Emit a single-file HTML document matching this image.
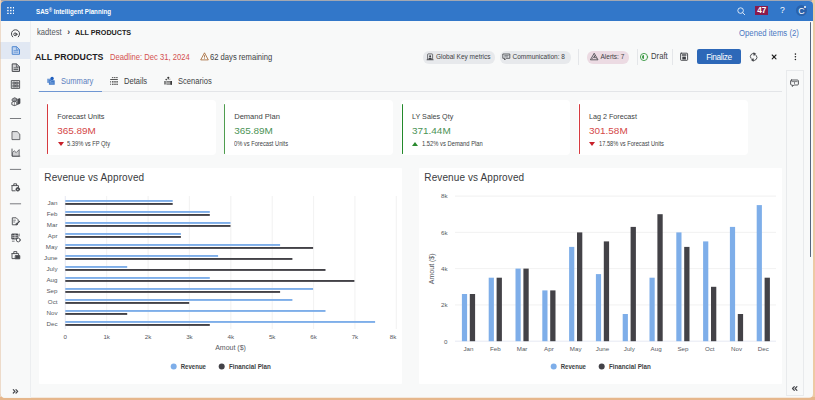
<!DOCTYPE html>
<html><head><meta charset="utf-8">
<style>
*{margin:0;padding:0;box-sizing:border-box}
html,body{width:815px;height:400px;overflow:hidden;background:#e9bb8d;font-family:"Liberation Sans",sans-serif}
.a{position:absolute;white-space:nowrap}
#frame{position:absolute;left:0;top:0;width:815px;height:400px;background:#e9bb8d}
#topgray{position:absolute;left:0;top:0;width:815px;height:1px;background:#a3a8b2}
#win{position:absolute;left:0;top:0;width:815px;height:400px;background:#f8f9f9;clip-path:inset(1px 2px 2.2px 0.9px round 4px)}
#hdr{position:absolute;left:0;top:0;width:815px;height:21px;background:#3277c9}
#side{position:absolute;left:0;top:21px;width:31px;height:379px;background:#f8f9f9;border-right:1px solid #eceef0}
.card{position:absolute;background:#fff;border-radius:4px}
.bar{position:absolute;width:2px;border-radius:1px}
.chip{position:absolute;height:12px;border-radius:6px;background:#e7e9ec;font-size:6.5px;color:#3d3f44;line-height:12px}
.sep{position:absolute;width:1px;background:#e4e6e9}
svg text{font-family:"Liberation Sans",sans-serif}
</style></head><body>
<div id="frame"></div>
<div id="topgray"></div>
<div class="a" style="left:0;top:0;width:1px;height:400px;background:#e9d3bf"></div>
<div class="a" style="left:812px;top:0;width:3px;height:400px;background:#eec9a4"></div>
<div class="a" style="left:0;top:397px;width:815px;height:3px;background:#e6b78c"></div>
<div id="win">
  <div id="hdr">
    <!-- grid icon -->
    <svg class="a" style="left:6.7px;top:7px" width="7.6" height="7.2" viewBox="0 0 8 8" fill="#fff">
      <rect x="0" y="0" width="1.6" height="1.6"/><rect x="3.2" y="0" width="1.6" height="1.6"/><rect x="6.4" y="0" width="1.6" height="1.6"/>
      <rect x="0" y="3.2" width="1.6" height="1.6"/><rect x="3.2" y="3.2" width="1.6" height="1.6"/><rect x="6.4" y="3.2" width="1.6" height="1.6"/>
      <rect x="0" y="6.4" width="1.6" height="1.6"/><rect x="3.2" y="6.4" width="1.6" height="1.6"/><rect x="6.4" y="6.4" width="1.6" height="1.6"/>
    </svg>
    <div class="a" style="left:36.3px;top:5.3px;font-size:6.9px;line-height:10px;font-weight:bold;color:#fff;transform:scaleX(0.9);transform-origin:0 0">SAS<span style="font-size:5px;vertical-align:1.5px">®</span> Intelligent Planning</div>
    <!-- search -->
    <svg class="a" style="left:736.5px;top:7px" width="9" height="9" viewBox="0 0 9 9" fill="none" stroke="#fff" stroke-width="0.8">
      <circle cx="3.6" cy="3.6" r="2.8"/><line x1="5.6" y1="5.6" x2="8" y2="8"/>
    </svg>
    <div class="a" style="left:755.2px;top:6px;width:13.2px;height:8.7px;background:#8a1a4c;color:#fff;font-weight:bold;font-size:8.2px;line-height:9.6px;letter-spacing:0.1px;text-align:center">47</div>
    <div class="a" style="left:780px;top:5.3px;font-size:8.6px;line-height:10px;color:#fff">?</div>
    <div class="a" style="left:795.7px;top:5.2px;width:11px;height:11px;border-radius:50%;background:#2a62ab"></div>
    <div class="a" style="left:798.3px;top:5.6px;font-size:8.8px;line-height:10px;color:#fff">C</div>
    <div class="a" style="left:804.1px;top:5.6px;width:2px;height:2px;border-radius:50%;background:#fff"></div>
  </div>

  <div id="side">
  </div>
  <div class="a" style="left:1px;top:41.9px;width:28.8px;height:16.8px;background:#e1e8f3"></div>
  <div class="a" style="left:0;top:41.9px;width:1.4px;height:16.8px;background:#7b92b2"></div>
  <svg class="a" style="left:0;top:0" width="30" height="400" viewBox="0 0 30 400" fill="none" stroke="#46484d" stroke-width="0.9" stroke-linejoin="round" stroke-linecap="round">
    <!-- dashboard -->
    <path d="M12.7 36.9 A4.1 4.1 0 1 1 18.3 36.9" stroke-width="1"/>
    <circle cx="15" cy="34.3" r="1.3" stroke-width="0.9"/>
    <path d="M15.9 33.1 L17.6 34.3 L15.9 35.5" stroke-width="0.8"/>
    <!-- doc selected -->
    <path d="M12.6 46.7 H16.6 L19.5 49.6 V54.3 H12.6 Z" stroke="#4f87d0" stroke-width="1" fill="#c3d6f0"/>
    <path d="M16.4 46.8 V49.8 H19.4" stroke="#4f87d0" stroke-width="0.7"/>
    <path d="M14 50.6 H17.8 M14 52.2 H17.8" stroke="#4f87d0" stroke-width="0.7"/>
    <!-- doc dark -->
    <path d="M12.6 63.9 H16.6 L19.5 66.8 V71.4 H12.6 Z" stroke="#46484d" stroke-width="1" fill="#d3d4d6"/>
    <path d="M16.4 64 V67 H19.4" stroke-width="0.7"/>
    <path d="M14 67.8 H17.8" stroke-width="0.7"/>
    <path d="M14 69.4 H17.8" stroke-width="0.9"/>
    <!-- grid -->
    <rect x="11.7" y="80.6" width="7.9" height="7.8" stroke-width="0.9"/>
    <rect x="13.1" y="82" width="2.2" height="2.1" fill="#8a8c90" stroke-width="0.6"/><rect x="16.1" y="82" width="2.2" height="2.1" fill="#8a8c90" stroke-width="0.6"/>
    <rect x="13.1" y="85" width="2.2" height="2.1" fill="#8a8c90" stroke-width="0.6"/><rect x="16.1" y="85" width="2.2" height="2.1" fill="#8a8c90" stroke-width="0.6"/>
    <!-- cubes -->
    <path d="M12.4 99 L14.6 97.7 L16.6 98.6 V100.6 L14.4 101.8 L12.4 100.9 Z" fill="#9a9ca0" stroke-width="0.8"/>
    <path d="M17.6 99.2 L20 98.6 V103.4 L17.6 104.4 Z" fill="#46484d" stroke-width="0.7"/>
    <path d="M12.2 102.2 L14.4 101.2 L16.8 102.2 V104.8 L14.4 105.6 L12.2 104.8 Z" fill="#fff" stroke-width="0.9"/>
    <path d="M14.4 101.4 V105.4" stroke-width="0.6"/>
    <!-- sep -->
    <path d="M10.3 118.5 H20.7" stroke="#6b6d72"/>
    <!-- doc -->
    <path d="M12.4 131.6 H17.2 L19.8 134.2 V139.6 H12.4 Z" fill="#dcdddf" stroke-width="0.8"/>
    <!-- chart -->
    <path d="M12 149 V156.2 H19.8" />
    <path d="M12.5 155.7 V152.5 L14.3 150.8 L16.2 152.6 L19.2 149.6 V155.7 Z" fill="#cfd0d2" stroke-width="0.7"/>
    <path d="M10.3 169.4 H20.7" stroke="#6b6d72"/>
    <!-- bag gear -->
    <path d="M12 185.6 H18.4 L18.6 187.5 M12 185.6 V190.8 H15.2" />
    <path d="M13.8 185.6 V183.8 H16.6 V185.6" />
    <circle cx="17.8" cy="189.3" r="1.8" fill="#46484d"/>
    <circle cx="17.8" cy="189.3" r="0.6" fill="#fff" stroke="none"/>
    <path d="M10.3 203.8 H20.7" stroke="#6b6d72"/>
    <!-- doc pencil -->
    <path d="M15.6 224.8 H12.3 V217.8 H16.2 L18.2 219.8 V221" stroke-width="0.9"/>
    <path d="M13.6 220.2 H15.4 M13.6 222 H14.8" stroke-width="0.7"/>
    <path d="M16.4 224.4 L19.4 221.4" stroke-width="1.3"/>
    <circle cx="16.6" cy="224.2" r="0.9" stroke-width="0.6"/>
    <!-- table gear -->
    <rect x="12.2" y="234" width="5.6" height="5" fill="#46484d"/>
    <path d="M12.7 235.7 H17.3 M12.7 237.4 H17.3 M15 234.5 V238.5" stroke="#fff" stroke-width="0.6"/>
    <path d="M12.3 241.2 H14.2 M19.2 234 V236" stroke-width="0.7"/>
    <circle cx="18.3" cy="240" r="1.9" fill="#fff"/>
    <!-- bag -->
    <path d="M12 253.6 H18.6 V255 M12 253.6 V258.6 H15.2" />
    <path d="M13.8 253.6 V251.6 H16.8 V253.6" />
    <rect x="15.6" y="255.6" width="4.2" height="3.2" fill="#46484d"/>
    <!-- collapse -->
    <path d="M13.3 389.6 L15 391.3 L13.3 393 M16 389.6 L17.7 391.3 L16 393" stroke-width="1.2"/>
  </svg>

  <!-- breadcrumb -->
  <div class="a" style="left:36.5px;top:28px;font-size:8.2px;line-height:10px;color:#55585e;transform:scaleX(0.93);transform-origin:0 0">kadtest</div>
  <div class="a" style="left:67.3px;top:27.2px;font-size:8.5px;line-height:10px;font-weight:bold;color:#3d3f44">›</div>
  <div class="a" style="left:75px;top:28px;font-size:7.9px;line-height:10px;font-weight:bold;color:#222;transform:scaleX(0.91);transform-origin:0 0">ALL PRODUCTS</div>
  <div class="a" style="left:739.3px;top:28px;font-size:8.4px;line-height:10px;color:#4a78c2;transform:scaleX(0.925);transform-origin:0 0">Opened items (2)</div>
  <div class="a" style="left:809.9px;top:22px;width:1.45px;height:234.5px;border-radius:0.7px;background:#56667c"></div>

  <!-- title row -->
  <div class="a" style="left:34.5px;top:50.8px;font-size:8.85px;transform:scaleX(0.99);transform-origin:0 0;line-height:12px;font-weight:bold;color:#1f2124">ALL PRODUCTS</div>
  <div class="a" style="left:110.3px;top:51.6px;font-size:8.4px;line-height:10px;color:#d4504f;transform:scaleX(0.91);transform-origin:0 0">Deadline: Dec 31, 2024</div>
  <svg class="a" style="left:199.5px;top:52px" width="9" height="9" viewBox="0 0 9 9" fill="none" stroke="#a0602a" stroke-width="0.8">
    <path d="M4.5 0.8 L8.3 7.9 H0.7 Z"/><line x1="4.5" y1="3.2" x2="4.5" y2="5.6"/><line x1="4.5" y1="6.4" x2="4.5" y2="7"/>
  </svg>
  <div class="a" style="left:210.4px;top:51.6px;font-size:8.4px;line-height:10px;color:#3d3f44;transform:scaleX(0.91);transform-origin:0 0">62 days remaining</div>

  <div class="chip" style="left:423px;top:50.5px;width:72px;height:13px;line-height:12.1px;padding-left:13px">Global Key metrics</div>
  <div class="chip" style="left:499.5px;top:50.5px;width:71px;height:13px;line-height:12.1px;padding-left:13px">Communication: 8</div>
  <div class="sep" style="left:577.5px;top:49px;height:16px"></div>
  <div class="chip" style="left:587px;top:50.5px;width:41.5px;height:13px;line-height:12.1px;padding-left:13.5px;background:#ecdbe3">Alerts: 7</div>
  <div class="sep" style="left:637px;top:49px;height:16px"></div>
  <div class="a" style="left:650.8px;top:51.3px;font-size:8.4px;line-height:10px;color:#3d3f44;transform:scaleX(0.92);transform-origin:0 0">Draft</div>
  <div class="sep" style="left:671.5px;top:49px;height:16px"></div>
  <div class="a" style="left:697px;top:49.4px;width:43.8px;height:14.5px;border-radius:2px;background:#2d68b8;color:#fff;font-size:8.3px;line-height:16.4px;text-align:center;letter-spacing:-0.4px">Finalize</div>
  <svg class="a" style="left:0;top:0" width="815" height="70" viewBox="0 0 815 70" fill="none" stroke="#3d3f44" stroke-width="0.8" stroke-linejoin="round" stroke-linecap="round">
    <!-- global key metrics icon -->
    <path d="M427.6 59.6 V54.5 Q427.6 53.9 428.2 53.9 H432 Q432.6 53.9 432.6 54.5 V59.6" stroke-width="0.7"/>
    <circle cx="430.1" cy="56.2" r="1" fill="#3d3f44" stroke="none"/>
    <path d="M428.2 59.8 Q428.4 57.6 430.1 57.6 Q431.8 57.6 432 59.8 Z" fill="#3d3f44" stroke="none"/>
    <path d="M427 59.8 H433.2" stroke-width="0.7"/>
    <!-- communication icon -->
    <path d="M503.2 54 H509.8 V58.3 H506.3 L504.6 60 V58.3 H503.2 Z"/>
    <path d="M504.7 55.6 H508.3 M504.7 56.9 H507.5" stroke-width="0.6"/>
    <!-- alerts triangle -->
    <path d="M594.4 53.6 L598 59.8 H590.8 Z"/>
    <path d="M594.4 55.8 V57.8 M592.6 58.4 L594.4 56.4 L596.2 58.4" stroke-width="0.7"/>
    <!-- draft -->
    <circle cx="644" cy="57" r="3.6" stroke="#3c9a45" stroke-width="0.9"/>
    <path d="M644 54.9 A2.1 2.1 0 0 0 644 59.1 Z" fill="#3c9a45" stroke="none"/>
    <!-- save -->
    <rect x="680.6" y="53.2" width="7" height="7.1" rx="0.6" stroke-width="0.9"/>
    <rect x="681.8" y="54.3" width="4.6" height="1.4" fill="#3d3f44" stroke="none"/>
    <rect x="682.3" y="56.6" width="3.6" height="2.9" fill="#3d3f44" stroke="none"/>
    <!-- refresh -->
    <path d="M751 58.4 A3 3 0 0 1 754.8 53.9" stroke-width="0.9"/>
    <path d="M756.2 55.4 A3 3 0 0 1 752.3 59.9" stroke-width="0.9"/>
    <path d="M754 53 L755.6 53.8 L754.3 55.2 Z" fill="#3d3f44"/>
    <path d="M753.1 61 L751.5 60.1 L752.8 58.8 Z" fill="#3d3f44"/>
    <!-- close -->
    <path d="M772.2 55 L776 58.9 M776 55 L772.2 58.9" stroke="#222" stroke-width="1.1"/>
    <!-- kebab -->
    <circle cx="795.4" cy="54.1" r="0.8" fill="#222" stroke="none"/>
    <circle cx="795.4" cy="56.8" r="0.8" fill="#222" stroke="none"/>
    <circle cx="795.4" cy="59.5" r="0.8" fill="#222" stroke="none"/>
  </svg>

  <!-- tabs -->
  <div class="a" style="left:38px;top:90.8px;width:744px;height:0.8px;background:#e3e5e8"></div>
  <div class="a" style="left:38.5px;top:90.5px;width:63px;height:1.2px;background:#6e96d2"></div>
  <div class="a" style="left:60.8px;top:76.5px;font-size:8.2px;line-height:10px;color:#5b7fc0;transform:scaleX(0.925);transform-origin:0 0">Summary</div>
  <div class="a" style="left:123.8px;top:76.5px;font-size:8.2px;line-height:10px;color:#3d3f44;transform:scaleX(0.925);transform-origin:0 0">Details</div>
  <div class="a" style="left:177.8px;top:76.5px;font-size:8.2px;line-height:10px;color:#3d3f44;transform:scaleX(0.925);transform-origin:0 0">Scenarios</div>

  <svg class="a" style="left:0;top:70px" width="200" height="20" viewBox="0 70 200 20">
    <!-- summary icon -->
    <rect x="47.2" y="78.7" width="3.8" height="4.2" fill="#6f9ad6"/>
    <path d="M48.9 80.2 H54.7 V84.7 H48.9 Z" fill="#3f78c8"/>
    <path d="M49.6 81.6 H51.2 M49.6 83 H53.6" stroke="#c7d8f1" stroke-width="0.5"/>
    <circle cx="52.1" cy="78.5" r="1.7" fill="#1f5fbf"/>
    <!-- details icon -->
    <g fill="#444">
      <rect x="111.9" y="77.2" width="1.4" height="0.9"/><rect x="113.9" y="77.2" width="1.6" height="0.9"/><rect x="116.1" y="77.2" width="1.6" height="0.9"/>
      <rect x="110.2" y="79" width="7.6" height="0.9"/>
      <rect x="110.2" y="81" width="0.9" height="0.8"/><rect x="112" y="81" width="1.6" height="0.8"/><rect x="114.2" y="81" width="1.6" height="0.8"/><rect x="116.3" y="81" width="1.6" height="0.8"/>
      <rect x="110.2" y="82.5" width="0.9" height="0.8"/><rect x="112" y="82.5" width="1.6" height="0.8"/><rect x="114.2" y="82.5" width="1.6" height="0.8"/><rect x="116.3" y="82.5" width="1.6" height="0.8"/>
      <rect x="110.2" y="84" width="0.9" height="0.8"/><rect x="112" y="84" width="1.6" height="0.8"/><rect x="114.2" y="84" width="1.6" height="0.8"/><rect x="116.3" y="84" width="1.6" height="0.8"/>
    </g>
    <!-- scenarios icon -->
    <g fill="#3a3a3a">
      <circle cx="168.3" cy="77.8" r="1.1"/>
      <circle cx="166.2" cy="79.6" r="0.8"/>
      <path d="M167.4 79.4 L170.6 78.7 L170.8 79.3 L167.6 80 Z" fill="#888"/>
      <path d="M164.4 81 H165.6 V84.5 H164.4 Z"/>
      <path d="M166.4 81 H172 V84.7 H166.4 Z" fill="#777"/>
      <path d="M170.6 81 H172 V84.7 H170.6 Z"/>
      <path d="M166.8 82.3 H170 M166.8 83.6 H170" stroke="#ddd" stroke-width="0.5"/>
    </g>
  </svg>
  <!-- right panel -->
  <div class="a" style="left:785.8px;top:69.8px;width:18px;height:326.2px;border:0.9px solid #e8eaec;background:#f8f9f9"></div>
  <svg class="a" style="left:780px;top:70px" width="30" height="330" viewBox="780 70 30 330" fill="none" stroke="#46484d" stroke-width="0.9" stroke-linejoin="round" stroke-linecap="round">
    <path d="M791.6 80 H797.4 Q798.4 80 798.4 81 V84 Q798.4 85 797.4 85 H793.8 L792.4 86.5 V85 H791.6 Q790.6 85 790.6 84 V81 Q790.6 80 791.6 80 Z"/>
    <path d="M791.8 81.6 H797.2" stroke-width="0.7"/>
    <path d="M794.5 82.6 V83.4" stroke-width="0.8"/>
    <path d="M794.3 386.6 L792.5 388.5 L794.3 390.4 M796.9 386.6 L795.1 388.5 L796.9 390.4" stroke-width="1.2"/>
  </svg>

  <!-- KPI cards -->
  <div class="card" style="left:46.5px;top:100px;width:169.0px;height:55.3px"></div>
  <div class="bar" style="left:46.7px;top:104.2px;height:49.6px;width:1.5px;background:#d63a3f"></div>
  <div class="a" style="left:57.2px;top:112.3px;font-size:7.35px;line-height:10px;color:#3d3f44">Forecast Units</div>
  <div class="a" style="left:57.2px;top:125.3px;font-size:9.95px;line-height:12px;color:#d44848">365.89M</div>
  <svg class="a" style="left:57.5px;top:141.5px" width="6" height="4" viewBox="0 0 6 4"><path d="M0 0H6L3 4Z" fill="#c8202a"/></svg>
  <div class="a" style="left:66.8px;top:140.1px;font-size:6.44px;line-height:8px;color:#3d3f44;transform:scaleX(0.893);transform-origin:0 0">5.39% vs FP Qty</div>
  <div class="card" style="left:223.5px;top:100px;width:169.5px;height:55.3px"></div>
  <div class="bar" style="left:223.7px;top:104.2px;height:49.6px;width:1.6px;background:#4f9d4f"></div>
  <div class="a" style="left:234.2px;top:112.3px;font-size:7.55px;line-height:10px;color:#3d3f44">Demand Plan</div>
  <div class="a" style="left:234.2px;top:125.3px;font-size:9.95px;line-height:12px;color:#4b9356">365.89M</div>
  <div class="a" style="left:234.2px;top:140.1px;font-size:6.41px;line-height:8px;color:#3d3f44;transform:scaleX(0.893);transform-origin:0 0">0% vs Forecast Units</div>
  <div class="card" style="left:401.3px;top:100px;width:168.5px;height:55.3px"></div>
  <div class="bar" style="left:401.5px;top:104.2px;height:49.6px;width:1.6px;background:#23892a"></div>
  <div class="a" style="left:412.0px;top:112.3px;font-size:7.2px;line-height:10px;color:#3d3f44">LY Sales Qty</div>
  <div class="a" style="left:412.0px;top:125.3px;font-size:9.95px;line-height:12px;color:#4b9356">371.44M</div>
  <svg class="a" style="left:412.3px;top:141.5px" width="6" height="4" viewBox="0 0 6 4"><path d="M0 4H6L3 0Z" fill="#2a8a2e"/></svg>
  <div class="a" style="left:421.6px;top:140.1px;font-size:6.52px;line-height:8px;color:#3d3f44;transform:scaleX(0.893);transform-origin:0 0">1.52% vs Demand Plan</div>
  <div class="card" style="left:578.3px;top:100px;width:169.5px;height:55.3px"></div>
  <div class="bar" style="left:578.5px;top:104.2px;height:49.6px;width:1.5px;background:#d63a3f"></div>
  <div class="a" style="left:589.0px;top:112.3px;font-size:7.2px;line-height:10px;color:#3d3f44">Lag 2 Forecast</div>
  <div class="a" style="left:589.0px;top:125.3px;font-size:9.95px;line-height:12px;color:#d44848">301.58M</div>
  <svg class="a" style="left:589.3px;top:141.5px" width="6" height="4" viewBox="0 0 6 4"><path d="M0 0H6L3 4Z" fill="#c8202a"/></svg>
  <div class="a" style="left:598.6px;top:140.1px;font-size:6.38px;line-height:8px;color:#3d3f44;transform:scaleX(0.893);transform-origin:0 0">17.58% vs Forecast Units</div>

  <!-- chart cards -->
  <div class="card" style="left:38.5px;top:168px;width:363px;height:215.6px;border-radius:1px"></div>
  <div class="card" style="left:418.6px;top:168px;width:363px;height:215.6px;border-radius:1px"></div>
  <div class="a" style="left:44.3px;top:171.4px;font-size:10px;line-height:13px;letter-spacing:0.11px;color:#3a3c41">Revenue vs Approved</div>
  <div class="a" style="left:424.3px;top:171.4px;font-size:10px;line-height:13px;letter-spacing:0.11px;color:#3a3c41">Revenue vs Approved</div>
</div>
<svg class="a" style="left:0;top:0" width="815" height="400" viewBox="0 0 815 400" font-size="6.2" fill="#55585e">
<line x1="106.7" y1="196" x2="106.7" y2="329" stroke="#eeeeee" stroke-width="0.8"/>
<line x1="148.1" y1="196" x2="148.1" y2="329" stroke="#eeeeee" stroke-width="0.8"/>
<line x1="189.4" y1="196" x2="189.4" y2="329" stroke="#eeeeee" stroke-width="0.8"/>
<line x1="230.8" y1="196" x2="230.8" y2="329" stroke="#eeeeee" stroke-width="0.8"/>
<line x1="272.2" y1="196" x2="272.2" y2="329" stroke="#eeeeee" stroke-width="0.8"/>
<line x1="313.6" y1="196" x2="313.6" y2="329" stroke="#eeeeee" stroke-width="0.8"/>
<line x1="354.9" y1="196" x2="354.9" y2="329" stroke="#eeeeee" stroke-width="0.8"/>
<line x1="396.3" y1="196" x2="396.3" y2="329" stroke="#eeeeee" stroke-width="0.8"/>
<line x1="65.3" y1="196" x2="65.3" y2="329" stroke="#dfe3f0" stroke-width="0.8"/>
<rect x="65.3" y="200.0" width="107.4" height="1.9" fill="#7eaee9"/>
<rect x="65.3" y="203.0" width="107.4" height="1.9" fill="#434247"/>
<text x="57.5" y="204.7" text-anchor="end">Jan</text>
<rect x="65.3" y="211.0" width="144.5" height="1.9" fill="#7eaee9"/>
<rect x="65.3" y="214.0" width="144.5" height="1.9" fill="#434247"/>
<text x="57.5" y="215.7" text-anchor="end">Feb</text>
<rect x="65.3" y="222.0" width="165.2" height="1.9" fill="#7eaee9"/>
<rect x="65.3" y="225.0" width="165.2" height="1.9" fill="#434247"/>
<text x="57.5" y="226.7" text-anchor="end">Mar</text>
<rect x="65.3" y="233.0" width="115.6" height="1.9" fill="#7eaee9"/>
<rect x="65.3" y="236.0" width="115.6" height="1.9" fill="#434247"/>
<text x="57.5" y="237.7" text-anchor="end">Apr</text>
<rect x="65.3" y="244.0" width="214.8" height="1.9" fill="#7eaee9"/>
<rect x="65.3" y="247.0" width="247.8" height="1.9" fill="#434247"/>
<text x="57.5" y="248.7" text-anchor="end">May</text>
<rect x="65.3" y="255.0" width="152.8" height="1.9" fill="#7eaee9"/>
<rect x="65.3" y="258.0" width="227.1" height="1.9" fill="#434247"/>
<text x="57.5" y="259.7" text-anchor="end">June</text>
<rect x="65.3" y="266.0" width="61.9" height="1.9" fill="#7eaee9"/>
<rect x="65.3" y="269.0" width="260.2" height="1.9" fill="#434247"/>
<text x="57.5" y="270.7" text-anchor="end">July</text>
<rect x="65.3" y="277.0" width="144.5" height="1.9" fill="#7eaee9"/>
<rect x="65.3" y="280.0" width="289.1" height="1.9" fill="#434247"/>
<text x="57.5" y="281.7" text-anchor="end">Aug</text>
<rect x="65.3" y="288.0" width="247.8" height="1.9" fill="#7eaee9"/>
<rect x="65.3" y="291.0" width="214.8" height="1.9" fill="#434247"/>
<text x="57.5" y="292.7" text-anchor="end">Sep</text>
<rect x="65.3" y="299.0" width="227.1" height="1.9" fill="#7eaee9"/>
<rect x="65.3" y="302.0" width="123.9" height="1.9" fill="#434247"/>
<text x="57.5" y="303.7" text-anchor="end">Oct</text>
<rect x="65.3" y="310.0" width="260.2" height="1.9" fill="#7eaee9"/>
<rect x="65.3" y="313.0" width="61.9" height="1.9" fill="#434247"/>
<text x="57.5" y="314.7" text-anchor="end">Nov</text>
<rect x="65.3" y="321.0" width="309.8" height="1.9" fill="#7eaee9"/>
<rect x="65.3" y="324.0" width="144.5" height="1.9" fill="#434247"/>
<text x="57.5" y="325.7" text-anchor="end">Dec</text>
<text x="65.3" y="339" text-anchor="middle">0</text>
<text x="106.7" y="339" text-anchor="middle">1k</text>
<text x="148.1" y="339" text-anchor="middle">2k</text>
<text x="189.4" y="339" text-anchor="middle">3k</text>
<text x="230.8" y="339" text-anchor="middle">4k</text>
<text x="272.2" y="339" text-anchor="middle">5k</text>
<text x="313.6" y="339" text-anchor="middle">6k</text>
<text x="354.9" y="339" text-anchor="middle">7k</text>
<text x="396.3" y="339" text-anchor="end">8k</text>
<line x1="455" y1="341.2" x2="776" y2="341.2" stroke="#dfe3f0" stroke-width="0.8"/>
<text x="447.5" y="343.5" text-anchor="end">0</text>
<line x1="455" y1="304.9" x2="776" y2="304.9" stroke="#eeeeee" stroke-width="0.8"/>
<text x="447.5" y="307.2" text-anchor="end">2k</text>
<line x1="455" y1="268.6" x2="776" y2="268.6" stroke="#eeeeee" stroke-width="0.8"/>
<text x="447.5" y="270.9" text-anchor="end">4k</text>
<line x1="455" y1="232.4" x2="776" y2="232.4" stroke="#eeeeee" stroke-width="0.8"/>
<text x="447.5" y="234.7" text-anchor="end">6k</text>
<line x1="455" y1="196.1" x2="776" y2="196.1" stroke="#eeeeee" stroke-width="0.8"/>
<text x="447.5" y="198.4" text-anchor="end">8k</text>
<rect x="461.9" y="294.0" width="5.2" height="47.2" fill="#7eaee9"/>
<rect x="469.8" y="294.0" width="5.3" height="47.2" fill="#434247"/>
<text x="468.5" y="351.2" text-anchor="middle">Jan</text>
<rect x="488.7" y="277.7" width="5.2" height="63.5" fill="#7eaee9"/>
<rect x="496.6" y="277.7" width="5.3" height="63.5" fill="#434247"/>
<text x="495.3" y="351.2" text-anchor="middle">Feb</text>
<rect x="515.5" y="268.6" width="5.2" height="72.6" fill="#7eaee9"/>
<rect x="523.4" y="268.6" width="5.3" height="72.6" fill="#434247"/>
<text x="522.1" y="351.2" text-anchor="middle">Mar</text>
<rect x="542.3" y="290.4" width="5.2" height="50.8" fill="#7eaee9"/>
<rect x="550.2" y="290.4" width="5.3" height="50.8" fill="#434247"/>
<text x="548.9" y="351.2" text-anchor="middle">Apr</text>
<rect x="569.1" y="246.9" width="5.2" height="94.3" fill="#7eaee9"/>
<rect x="577.0" y="232.4" width="5.3" height="108.8" fill="#434247"/>
<text x="575.7" y="351.2" text-anchor="middle">May</text>
<rect x="595.9" y="274.1" width="5.2" height="67.1" fill="#7eaee9"/>
<rect x="603.8" y="241.4" width="5.3" height="99.8" fill="#434247"/>
<text x="602.5" y="351.2" text-anchor="middle">June</text>
<rect x="622.7" y="314.0" width="5.2" height="27.2" fill="#7eaee9"/>
<rect x="630.6" y="226.9" width="5.3" height="114.3" fill="#434247"/>
<text x="629.3" y="351.2" text-anchor="middle">July</text>
<rect x="649.5" y="277.7" width="5.2" height="63.5" fill="#7eaee9"/>
<rect x="657.4" y="214.2" width="5.3" height="127.0" fill="#434247"/>
<text x="656.1" y="351.2" text-anchor="middle">Aug</text>
<rect x="676.3" y="232.4" width="5.2" height="108.8" fill="#7eaee9"/>
<rect x="684.2" y="246.9" width="5.3" height="94.3" fill="#434247"/>
<text x="682.9" y="351.2" text-anchor="middle">Sep</text>
<rect x="703.1" y="241.4" width="5.2" height="99.8" fill="#7eaee9"/>
<rect x="711.0" y="286.8" width="5.3" height="54.4" fill="#434247"/>
<text x="709.7" y="351.2" text-anchor="middle">Oct</text>
<rect x="729.9" y="226.9" width="5.2" height="114.3" fill="#7eaee9"/>
<rect x="737.8" y="314.0" width="5.3" height="27.2" fill="#434247"/>
<text x="736.5" y="351.2" text-anchor="middle">Nov</text>
<rect x="756.7" y="205.1" width="5.2" height="136.1" fill="#7eaee9"/>
<rect x="764.6" y="277.7" width="5.3" height="63.5" fill="#434247"/>
<text x="763.3" y="351.2" text-anchor="middle">Dec</text>
<text x="230.5" y="349.5" text-anchor="middle" font-size="7" fill="#55585e">Amout ($)</text>
<text transform="translate(434.4,268.8) rotate(-90)" text-anchor="middle" font-size="7" fill="#55585e">Amout ($)</text>
<circle cx="173.7" cy="366.4" r="3" fill="#7eaee9"/>
<text x="180.7" y="369.2" font-size="7" textLength="25.3" lengthAdjust="spacingAndGlyphs" font-weight="bold" fill="#3d3f44">Revenue</text>
<circle cx="221.7" cy="366.4" r="3" fill="#434247"/>
<text x="228.9" y="369.2" font-size="7" textLength="41.9" lengthAdjust="spacingAndGlyphs" font-weight="bold" fill="#3d3f44">Financial Plan</text>
<circle cx="553.7" cy="366.4" r="3" fill="#7eaee9"/>
<text x="560.7" y="369.2" font-size="7" textLength="25.3" lengthAdjust="spacingAndGlyphs" font-weight="bold" fill="#3d3f44">Revenue</text>
<circle cx="601.7" cy="366.4" r="3" fill="#434247"/>
<text x="608.9" y="369.2" font-size="7" textLength="41.9" lengthAdjust="spacingAndGlyphs" font-weight="bold" fill="#3d3f44">Financial Plan</text>
</svg>
</body></html>
